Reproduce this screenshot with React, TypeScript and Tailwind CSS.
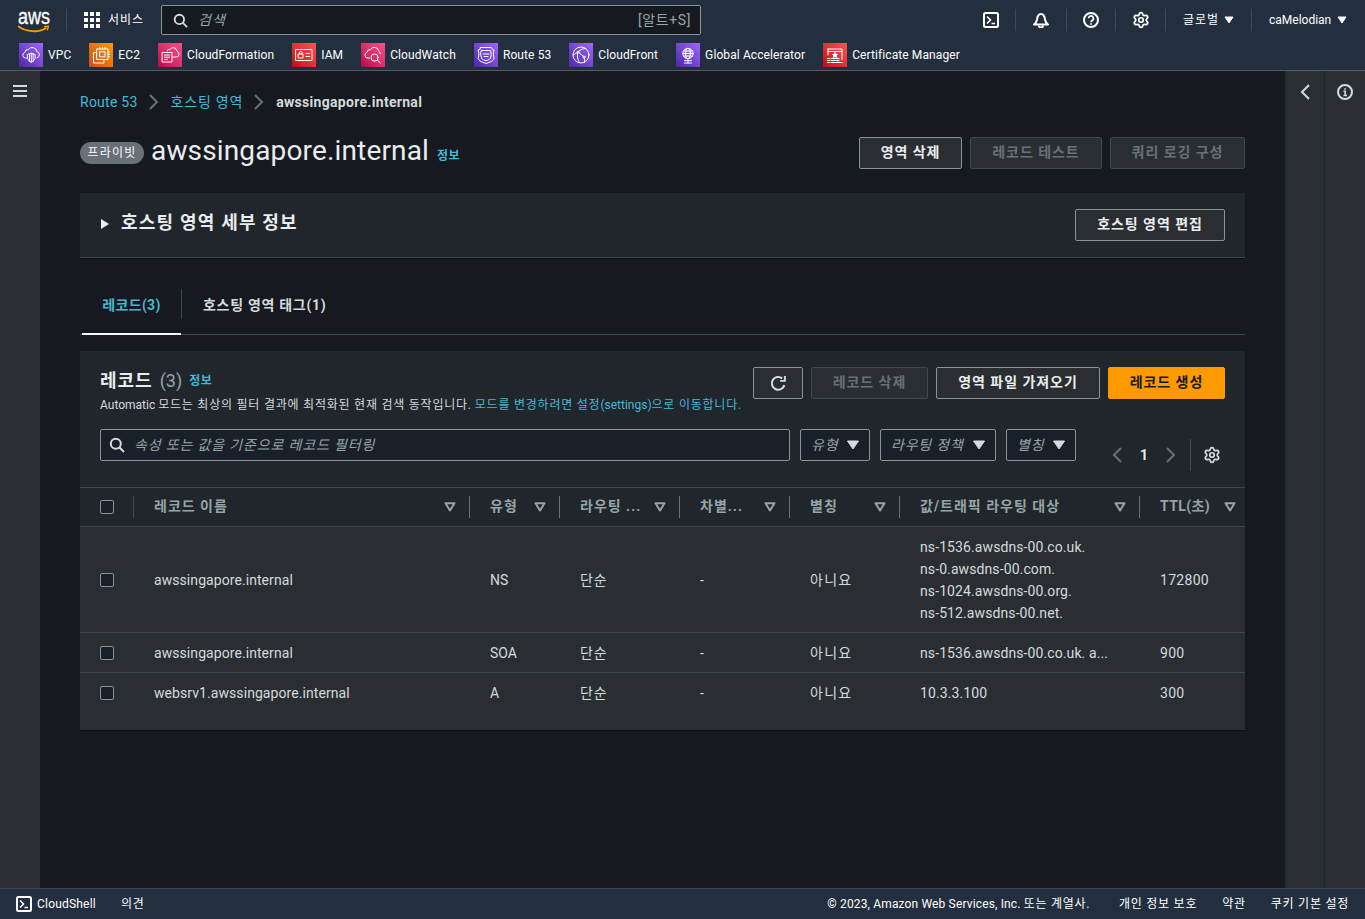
import React from "react";
import { Settings } from "lucide-react";

const font = "font-['Roboto','Noto_Sans_CJK_KR',sans-serif]";

function Tile({ cls, children }: { cls: string; children: React.ReactNode }) {
  return (
    <span className={`w-6 h-6 shrink-0 ${cls} flex items-center justify-center`}>
      <svg viewBox="0 0 24 24" width="24" height="24" fill="none" stroke="#fff" strokeWidth="1" strokeLinecap="round" strokeLinejoin="round">
        {children}
      </svg>
    </span>
  );
}

const purple = "bg-linear-to-tr from-[#4d27a8] to-[#a166ff]";
const orange = "bg-linear-to-tr from-[#c8511b] to-[#ff9900]";
const pink = "bg-linear-to-tr from-[#b0084d] to-[#ff4f8b]";
const red = "bg-linear-to-tr from-[#bd0816] to-[#ff5252]";

const links: { name: string; cls: string; icon: React.ReactNode }[] = [
  {
    name: "VPC",
    cls: purple,
    icon: (
      <>
        <path d="M7.500 15H6.500a2.800 2.800 0 0 1-.6-5.500 3 3 0 0 1 3.400-2.800A4.600 4.600 0 0 1 17.800 8.500a3.300 3.300 0 0 1 .2 6.400" />
        <path d="M8.500 11.500l3.800-1.300 3.800 1.300v3c0 2.300-1.500 3.800-3.800 4.800-2.300-1-3.800-2.500-3.800-4.800z" />
        <path d="M12.300 10.200v9M10.500 11v7.400M14.100 11v7.400" />
      </>
    ),
  },
  {
    name: "EC2",
    cls: orange,
    icon: (
      <>
        <path d="M7 9.500H4.500V20H15v-2.500" />
        <rect x="8" y="6" width="11" height="10.500" />
        <rect x="11" y="8.800" width="5" height="5" />
        <path d="M11 6V4.500M13.500 6V4.500M16 6V4.500M19 8.800h1.500M19 11.300h1.500M19 13.800h1.500" />
      </>
    ),
  },
  {
    name: "CloudFormation",
    cls: pink,
    icon: (
      <>
        <path d="M15 14h3.200a3 3 0 0 0 .6-5.900 3.600 3.600 0 0 0-6.800-1.500 2.400 2.400 0 0 0-3 1.400" />
        <rect x="4.500" y="9.500" width="9.500" height="9.500" />
        <path d="M6.500 12h5M6.500 14.200h5M6.500 16.400h3" />
      </>
    ),
  },
  {
    name: "IAM",
    cls: red,
    icon: (
      <>
        <rect x="4" y="6.500" width="16" height="11" />
        <rect x="6.500" y="11" width="4.500" height="4" />
        <path d="M7.400 11V9.800a1.300 1.300 0 0 1 2.700 0V11M14 10.500h3.500M14 13.500h3.500" />
      </>
    ),
  },
  {
    name: "CloudWatch",
    cls: pink,
    icon: (
      <>
        <path d="M8.500 15H6.800a2.900 2.900 0 0 1-.7-5.700 3 3 0 0 1 3.400-2.700 4.400 4.400 0 0 1 8.200 1.600 3 3 0 0 1 1.600 2.500" />
        <circle cx="13.600" cy="14.600" r="3.600" />
        <path d="M16.300 17.200l3 2.700" />
      </>
    ),
  },
  {
    name: "Route 53",
    cls: purple,
    icon: (
      <>
        <path d="M6.500 4.500h11l.8 1.800 1.700.7-.8 4 .8 4.500c-.5 2-2.500 3-4 3.500L12 20.500l-3.800-1.500c-1.500-.5-3.500-1.500-4-3.500l.8-4.500-.8-4 1.700-.7z" />
        <path d="M7.500 7.500h9l.8 4-.8 4c-1.500 1-3 1.800-4.500 2.300-1.500-.5-3-1.300-4.500-2.300l-.8-4z" />
        <path d="M9 11h6M10 13.500h4" />
      </>
    ),
  },
  {
    name: "CloudFront",
    cls: purple,
    icon: (
      <>
        <circle cx="12" cy="12" r="8" />
        <circle cx="9" cy="9.200" r="1" />
        <circle cx="15" cy="14" r="1" />
        <path d="M9.700 8.400C11.500 6.600 14 5.400 16.500 5.500M8.600 10.200C8 13.300 8.600 17 10.500 19.700M10 9.700l4.200 3.500M15.300 15c.3 1.600.3 3 .1 4.200M4.200 12c1.200-1 2.600-2 3.900-2.300" />
      </>
    ),
  },
  {
    name: "Global Accelerator",
    cls: purple,
    icon: (
      <>
        <circle cx="12" cy="10.500" r="5.200" fill="#fff" fillOpacity="0.15" />
        <ellipse cx="12" cy="10.500" rx="2.400" ry="5.200" />
        <path d="M6.800 10.500h10.400M7.600 8h8.800M7.600 13h8.800M12 15.700V20M8.500 20h7M8.500 17.700h7" />
      </>
    ),
  },
  {
    name: "Certificate Manager",
    cls: red,
    icon: (
      <>
        <path d="M5 6h14v10.500" />
        <path d="M5 6v6M5 8.500h14" />
        <path d="M12 9.800l.8 1.500 1.700.2-1.200 1.200.3 1.700-1.600-.8-1.600.8.3-1.700-1.200-1.200 1.700-.2z" fill="#fff" />
        <path d="M4.500 15.500h2M8 15.500h8M4.500 17.500h2M8 17.500h8M4.500 19.500h2M8 19.500h11" />
      </>
    ),
  },
];

function Caret() {
  return <svg width="12" height="10" viewBox="0 0 12 10" className="shrink-0"><path d="M0.500 1h11L6 9z" fill="currentColor" stroke="currentColor" strokeLinejoin="round" /></svg>;
}

function SmallCaret() {
  return <svg width="10" height="8" viewBox="0 0 10 8" className="shrink-0"><path d="M1 1h8L5 7z" fill="currentColor" stroke="currentColor" strokeLinejoin="round" /></svg>;
}

function SortIcon() {
  return (
    <svg width="12" height="10" viewBox="0 0 12 10" className="shrink-0 text-[#95a5a6]">
      <path d="M1.500 1.300h9L6 8.500z" fill="none" stroke="currentColor" strokeWidth="2" strokeLinejoin="round" />
    </svg>
  );
}

function Terminal() {
  return (
    <svg width="16" height="16" viewBox="0 0 16 16" fill="none" stroke="currentColor" strokeWidth="2" className="shrink-0">
      <rect x="1" y="1" width="14" height="14" rx="1.500" />
      <path d="M4 4.500L7.500 8 4 11.500M8.500 11.500H12" strokeWidth="1.600" />
    </svg>
  );
}

function Gear() {
  return <Settings size={18} strokeWidth={2.3} className="-m-px" />;
}

function Search({ size = 16 }: { size?: number }) {
  return (
    <svg width={size} height={size} viewBox="0 0 16 16" fill="none" stroke="currentColor" strokeWidth="2">
      <circle cx="6.800" cy="6.800" r="5" />
      <path d="M10.500 10.500l4.500 4.500" />
    </svg>
  );
}

function Btn({ children, w, kind = "normal" }: { children: React.ReactNode; w: string; kind?: "normal" | "disabled" | "primary" }) {
  const k =
    kind === "normal"
      ? "border-[#879596] bg-[#2a2e33] text-[#eaeded]"
      : kind === "disabled"
        ? "border-[#414750] bg-[#2a2e33] text-[#687078]"
        : "border-[#ff9900] bg-[#ff9900] text-[#16191f]";
  return (
    <div className={`${w} h-8 border rounded-[2px] flex items-center justify-center pb-[2px] text-[14px] leading-5 font-bold tracking-[0.95px] shrink-0 ${k}`}>
      {children}
    </div>
  );
}

function Sep() {
  return <span className="block w-px h-[22px] bg-[#414750]" />;
}

const cols = "grid grid-cols-[54px_336px_90px_120px_110px_110px_240px_105px]";

function Head({ label, last }: { label: string; last?: boolean }) {
  return (
    <div className={`h-[22px] flex items-center justify-between pl-5 ${last ? "pr-[9px]" : "pr-[13px] border-r border-[#687078]"}`}>
      <span className={`text-[14px] leading-5 font-bold pb-[2px] text-[#95a5a6] whitespace-nowrap ${last ? "tracking-[0.4px]" : "tracking-[1px]"}`}>{label}</span>
      <SortIcon />
    </div>
  );
}

function Check() {
  return <span className="w-[14px] h-[14px] border border-[#879596] rounded-[2px] bg-[#1a2029] block" />;
}

function Row({ name, type, value, ttl, h, border = true }: { name: string; type: string; value: React.ReactNode; ttl: string; h: string; border?: boolean }) {
  const cell = "pl-5 flex items-center text-[14px] leading-[22px] text-[#d5dbdb] whitespace-nowrap";
  return (
    <div className={`${cols} ${h} ${border ? "border-b border-[#414750]" : ""}`}>
      <div className="pl-[20px] flex items-center"><Check /></div>
      <div className={`${cell} tracking-[0.07px]`}>{name}</div>
      <div className={cell}>{type}</div>
      <div className={`${cell} tracking-[0.9px]`}>단순</div>
      <div className={cell}>-</div>
      <div className={`${cell} tracking-[1.3px]`}>아니요</div>
      <div className={`${cell} tracking-[0.1px]`}>{value}</div>
      <div className={`${cell} tracking-[0.3px]`}>{ttl}</div>
    </div>
  );
}

function FilterSelect({ label, w }: { label: string; w: string }) {
  return (
    <div className={`${w} h-8 border border-[#879596] rounded-[2px] bg-[#1a2029] flex items-center justify-between px-[10px] text-[#95a5a6] shrink-0`}>
      <span className="italic text-[14px] leading-5 tracking-[0.8px]">{label}</span>
      <span className="text-[#d5dbdb]"><Caret /></span>
    </div>
  );
}

const Chevron = () => (
  <svg width="12" height="16" viewBox="0 0 12 16" fill="none" stroke="#687078" strokeWidth="2" className="ml-[10px] mr-[11px]"><path d="M2 1l7 7-7 7" /></svg>
);

export default function App() {
  return (
    <div className={`${font} h-screen w-full overflow-hidden flex flex-col bg-[#16191f] text-[#d5dbdb]`}>
      <header className="h-[71px] shrink-0 bg-[#232f3e] border-b border-[#545b64] flex flex-col">
        <div className="h-10 flex items-center pl-[18px] text-[#fff]">
          <div className="w-[32px] h-[26px] relative shrink-0">
            <span className="absolute left-0 top-[-1px] text-[18px] leading-[20px] font-['Liberation_Sans',sans-serif] scale-y-125 [-webkit-text-stroke:0.3px_#fff]">aws</span>
            <svg width="32" height="9" viewBox="0 0 32 9" className="absolute left-0 top-[18px]" fill="none">
              <path d="M0.500 1.500C8 7 21 8 28 3" stroke="#ff9900" strokeWidth="1.800" strokeLinecap="round" />
              <path d="M26 1.600l4.500-.4-1.200 4.200" stroke="#ff9900" strokeWidth="1.300" strokeLinejoin="round" />
            </svg>
          </div>
          <span className="ml-4 w-px h-[22px] bg-[#414750]" />
          <svg width="16" height="16" viewBox="0 0 16 16" fill="#fff" className="ml-[17px]">
            <rect x="0" y="0" width="4" height="4" /><rect x="6" y="0" width="4" height="4" /><rect x="12" y="0" width="4" height="4" />
            <rect x="0" y="6" width="4" height="4" /><rect x="6" y="6" width="4" height="4" /><rect x="12" y="6" width="4" height="4" />
            <rect x="0" y="12" width="4" height="4" /><rect x="6" y="12" width="4" height="4" /><rect x="12" y="12" width="4" height="4" />
          </svg>
          <span className="ml-2 w-9 text-[12px] leading-4 tracking-[1px] text-[#fff] whitespace-nowrap">서비스</span>
          <div className="ml-[17px] w-[540px] h-[30px] border border-[#879596] rounded-[2px] bg-[#16191f] flex items-center pl-[11px] pr-[9px]">
            <span className="text-[#d5dbdb]"><Search size={15} /></span>
            <span className="ml-[10px] italic text-[14px] leading-5 tracking-[1px] text-[#95a5a6]">검색</span>
            <span className="ml-auto text-[14px] leading-5 tracking-[0.6px] text-[#95a5a6]">[알트+S]</span>
          </div>
          <div className="ml-auto flex items-center text-[#fff]">
            <Terminal />
            <span className="ml-4"><Sep /></span>
            <span className="ml-[17px]">
              <svg width="16" height="16" viewBox="0 0 16 16" fill="none" stroke="currentColor" strokeWidth="2" strokeLinejoin="round" className="block">
                <path d="M1 12.500c1.600-1 2.600-2.500 3-5 .4-3 2-5.500 4-5.500s3.600 2.500 4 5.500c.4 2.500 1.400 4 3 5z" />
                <path d="M6 13.500a2 2 0 0 0 4 0" />
              </svg>
            </span>
            <span className="ml-[17px]"><Sep /></span>
            <span className="ml-4">
              <svg width="16" height="16" viewBox="0 0 16 16" fill="none" stroke="currentColor" strokeWidth="2" className="block">
                <circle cx="8" cy="8" r="7" />
                <path d="M5.600 6.300a2.400 2.400 0 1 1 3.500 2.200c-.7.4-1.100.8-1.100 1.700" strokeWidth="1.700" />
                <path d="M8 11.200v1.600" strokeWidth="1.700" />
              </svg>
            </span>
            <span className="ml-4"><Sep /></span>
            <span className="ml-[17px]"><Gear /></span>
            <span className="ml-4"><Sep /></span>
            <span className="ml-[17px] w-9 text-[12px] leading-4 tracking-[1px] whitespace-nowrap">글로벌</span>
            <span className="ml-[5px]"><SmallCaret /></span>
            <span className="ml-[17px]"><Sep /></span>
            <span className="ml-[17px] w-[62px] text-[12px] leading-4 whitespace-nowrap">caMelodian</span>
            <span className="ml-[6px] mr-[18px]"><SmallCaret /></span>
          </div>
        </div>
        <div className="h-[30px] flex items-center pl-[19px] gap-[18px]">
          {links.map((l) => (
            <div key={l.name} className="flex items-center gap-[5px]">
              <Tile cls={l.cls}>{l.icon}</Tile>
              <span className="text-[12px] leading-4 tracking-[0.1px] text-[#fff] whitespace-nowrap">{l.name}</span>
            </div>
          ))}
        </div>
      </header>

      <div className="flex-1 min-h-0 flex">
        <aside className="w-10 shrink-0 bg-[#2a2e33] flex justify-center pt-[13px]">
          <svg width="14" height="14" viewBox="0 0 14 14" stroke="#d5dbdb" strokeWidth="2"><path d="M0 2h14M0 7h14M0 12h14" /></svg>
        </aside>

        <main className="flex-1 min-w-0 pl-10 pr-10">
          <nav className="h-[22px] mt-5 flex items-center text-[14px] leading-5">
            <span className="text-[#44b9d6] tracking-[0.25px]">Route 53</span>
            <Chevron />
            <span className="text-[#44b9d6] tracking-[0.8px]">호스팅 영역</span>
            <Chevron />
            <span className="text-[#d5dbdb] font-bold tracking-[0.3px]">awssingapore.internal</span>
          </nav>

          <div className="mt-[24px] h-8 flex items-center">
            <span className="w-[64px] h-[22px] rounded-full bg-[#687078] text-[#fafafa] text-[12px] leading-4 tracking-[1.3px] pb-[1px] flex items-center justify-center shrink-0">프라이빗</span>
            <span className="ml-[7px] -mt-[5px] text-[28px] leading-9 tracking-[0.15px] text-[#eaeded]">awssingapore.internal</span>
            <span className="ml-2 mt-[5px] text-[12px] leading-4 font-bold tracking-[0.6px] text-[#44b9d6]">정보</span>
            <div className="ml-auto flex gap-2">
              <Btn w="w-[103px]">영역 삭제</Btn>
              <Btn w="w-[132px]" kind="disabled">레코드 테스트</Btn>
              <Btn w="w-[135px]" kind="disabled">쿼리 로깅 구성</Btn>
            </div>
          </div>

          <section className="mt-6 h-[65px] bg-[#21252c] border-b border-[#414750] shadow-[0_1px_1px_rgba(0,0,0,0.3)] flex items-center pl-[21px] pr-5">
            <svg width="8" height="10" viewBox="0 0 8 10" fill="#eaeded" className="-mt-[2px]"><path d="M0 0l8 5-8 5z" /></svg>
            <h2 className="ml-3 text-[18px] leading-[22px] font-bold tracking-[1.2px] text-[#eaeded] -mt-[5px]">호스팅 영역 세부 정보</h2>
            <div className="ml-auto"><Btn w="w-[150px]">호스팅 영역 편집</Btn></div>
          </section>

          <div className="mt-[31px] h-[46px] border-b border-[#414750] flex">
            <div className="ml-[2px] w-[99px] h-[46px] border-b-2 border-[#fafafa] flex items-start justify-center pt-[6px]">
              <span className="text-[14px] leading-5 font-bold tracking-[0.3px] text-[#44b9d6]">레코드(3)</span>
            </div>
            <span className="w-px h-[30px] bg-[#414750]" />
            <div className="pl-[21px] pt-[6px] flex items-start">
              <span className="text-[14px] leading-5 font-bold tracking-[0.7px] text-[#d5dbdb]">호스팅 영역 태그(1)</span>
            </div>
          </div>

          <section className="mt-4 h-[379px] bg-[#21252c] shadow-[0_1px_1px_rgba(0,0,0,0.4)]">
            <div className="h-[137px] border-b border-[#414750] px-5 pt-4">
              <div className="flex items-start">
                <div className="min-w-0">
                  <div className="h-[26px] mt-[1px] flex items-center">
                    <span className="text-[18px] leading-[22px] font-bold tracking-[1px] text-[#eaeded]">레코드</span>
                    <span className="ml-[7px] text-[18px] leading-[22px] text-[#95a5a6]">(3)</span>
                    <span className="ml-[7px] text-[12px] leading-4 font-bold tracking-[0.6px] text-[#44b9d6]">정보</span>
                  </div>
                  <p className="mt-[3px] text-[12px] leading-4 text-[#d5dbdb] whitespace-nowrap">
                    Automatic <span className="tracking-[0.77px]">모드는 최상의 필터 결과에 최적화된 현재 검색 동작입니다.</span>{" "}
                    <span className="text-[#44b9d6]"><span className="tracking-[0.77px]">모드를 변경하려면 설정</span>(settings)<span className="tracking-[0.77px]">으로 이동합니다.</span></span>
                  </p>
                </div>
                <div className="ml-auto flex gap-2">
                  <div className="w-[50px] h-8 border border-[#879596] rounded-[2px] bg-[#2a2e33] flex items-center justify-center text-[#d5dbdb]">
                    <svg width="17" height="17" viewBox="0 0 16 16" fill="none" stroke="currentColor" strokeWidth="2">
                      <path d="M13.500 9.500A6 6 0 1 1 11.500 3.200" />
                      <path d="M14 1v4.500H9.500" strokeWidth="1.800" />
                    </svg>
                  </div>
                  <Btn w="w-[117px]" kind="disabled">레코드 삭제</Btn>
                  <Btn w="w-[164px]">영역 파일 가져오기</Btn>
                  <Btn w="w-[117px]" kind="primary">레코드 생성</Btn>
                </div>
              </div>
              <div className="mt-[16px] flex items-start">
                <div className="w-[690px] h-8 border border-[#879596] rounded-[2px] bg-[#1a2029] flex items-center pl-2 text-[#95a5a6] shrink-0">
                  <span className="text-[#d5dbdb]"><Search size={16} /></span>
                  <span className="ml-[9px] italic text-[14px] leading-5 tracking-[0.85px]">속성 또는 값을 기준으로 레코드 필터링</span>
                </div>
                <div className="ml-[10px] flex gap-[10px]">
                  <FilterSelect label="유형" w="w-[70px]" />
                  <FilterSelect label="라우팅 정책" w="w-[116px]" />
                  <FilterSelect label="별칭" w="w-[70px]" />
                </div>
                <div className="ml-auto flex items-center h-8 mt-[10px]">
                  <svg width="12" height="16" viewBox="0 0 12 16" fill="none" stroke="#687078" strokeWidth="2"><path d="M10 1L3 8l7 7" /></svg>
                  <span className="ml-[17px] mr-[17px] text-[14px] leading-5 font-bold text-[#eaeded]">1</span>
                  <svg width="12" height="16" viewBox="0 0 12 16" fill="none" stroke="#687078" strokeWidth="2"><path d="M2 1l7 7-7 7" /></svg>
                  <span className="ml-[13px] w-px h-8 bg-[#414750]" />
                  <span className="ml-[13px] text-[#d5dbdb]"><Gear /></span>
                  <span className="w-[5px]" />
                </div>
              </div>
            </div>

            <div className={`${cols} h-[39px] items-center border-b border-[#414750]`}>
              <div className="h-[22px] pl-5 flex items-center border-r border-[#414750]"><Check /></div>
              <Head label="레코드 이름" />
              <Head label="유형" />
              <Head label="라우팅 ..." />
              <Head label="차별..." />
              <Head label="별칭" />
              <Head label="값/트래픽 라우팅 대상" />
              <Head label="TTL(초)" last />
            </div>

            <div className="bg-[#2a2e33] h-[203px] flex flex-col">
              <Row
                h="h-[106px]"
                name="awssingapore.internal"
                type="NS"
                ttl="172800"
                value={
                  <div>
                    <div>ns-1536.awsdns-00.co.uk.</div>
                    <div>ns-0.awsdns-00.com.</div>
                    <div>ns-1024.awsdns-00.org.</div>
                    <div>ns-512.awsdns-00.net.</div>
                  </div>
                }
              />
              <Row h="h-[40px]" name="awssingapore.internal" type="SOA" ttl="900" value="ns-1536.awsdns-00.co.uk. a..." />
              <Row h="h-[40px]" name="websrv1.awssingapore.internal" type="A" ttl="300" value="10.3.3.100" border={false} />
            </div>
          </section>
        </main>

        <aside className="w-[80px] shrink-0 flex bg-[#2a2e33]">
          <div className="w-10 border-l border-r border-[#21252c] flex justify-center pt-[13px]">
            <svg width="10" height="16" viewBox="0 0 10 16" fill="none" stroke="#d5dbdb" strokeWidth="2" className="block"><path d="M9 1L2 8l7 7" /></svg>
          </div>
          <div className="w-10 flex justify-center pt-[13px] text-[#d5dbdb]">
            <svg width="16" height="16" viewBox="0 0 16 16" fill="none" stroke="currentColor" strokeWidth="2" className="block">
              <circle cx="8" cy="8" r="7" />
              <path d="M6.500 7.300H8.200V11.500M6.500 11.500h3.500" strokeWidth="1.600" />
              <path d="M7.200 4.200h1.600v1.600H7.200z" fill="currentColor" stroke="none" />
            </svg>
          </div>
        </aside>
      </div>

      <footer className="h-[31px] shrink-0 bg-[#232f3e] border-t border-[#414750] flex items-center pl-4 pr-4 text-[12px] leading-4 text-[#fff]">
        <Terminal />
        <span className="ml-[5px] tracking-[0.2px]">CloudShell</span>
        <span className="ml-[25px] tracking-[0.7px]">의견</span>
        <div className="ml-auto flex gap-[25px]">
          <span className="tracking-[0.15px]">© 2023, Amazon Web Services, Inc. <span className="tracking-[0.7px]">또는 계열사.</span></span>
          <span className="ml-1 tracking-[0.75px]">개인 정보 보호</span>
          <span className="tracking-[0.75px]">약관</span>
          <span className="tracking-[0.75px]">쿠키 기본 설정</span>
        </div>
      </footer>
    </div>
  );
}
